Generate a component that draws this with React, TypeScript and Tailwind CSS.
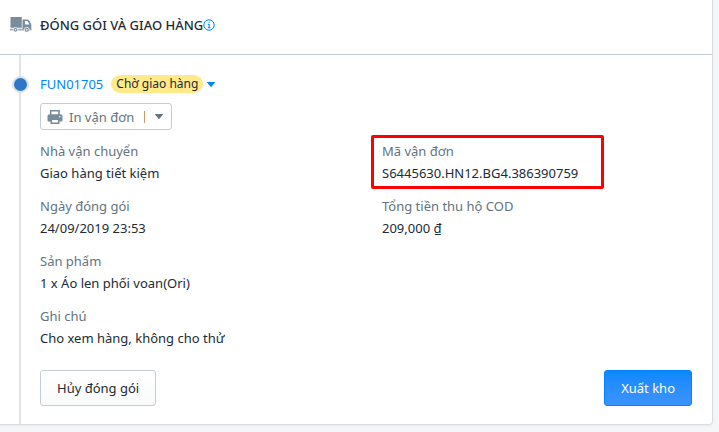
import type { ReactNode } from "react"

interface FieldProps {
    label: string
    value: string
    highlighted?: boolean
}

function Field({ label, value, highlighted }: FieldProps) {
    return (
        <div className="relative">
            {highlighted && (
                <div className="pointer-events-none absolute -top-[5px] -left-[11px] h-[54px] w-[233px] rounded-xs border-3 border-[#ff0000]" />
            )}
            <dt className="text-[#637381]">{label}</dt>
            <dd>{value}</dd>
        </div>
    )
}

function TruckIcon() {
    return (
        <svg className="h-4 w-[22px] shrink-0" viewBox="0 0 22 16" fill="#798c9c" aria-hidden="true">
            <path d="M.5 0h11.300v10.800H.5z" />
            <path fillRule="evenodd" d="M12.500 2.500h4.700c.9 0 1.500.4 2 1.100l1.600 2.700c.3.500.5 1 .5 1.600v4.100h-8.800zM15 4v3.500h4.500L18 4.700a1.400 1.400 0 0 0-1.200-.7z" />
            <path d="M0 11.800h21.500v1.700H0z" opacity=".75" />
            <circle cx="5.500" cy="12.800" r="2.300" stroke="#fff" strokeWidth=".8" />
            <circle cx="16.800" cy="12.800" r="2.500" stroke="#fff" strokeWidth=".8" />
            <circle cx="5.500" cy="12.800" r=".8" fill="#fff" />
            <circle cx="16.800" cy="12.800" r=".9" fill="#fff" />
        </svg>
    )
}

function InfoIcon() {
    return (
        <svg className="size-3" viewBox="0 0 12 12" fill="none" stroke="#0084ff" aria-hidden="true">
            <circle cx="6" cy="6" r="5.200" />
            <path d="M6.200 5v4M4.900 5.300h1.300M4.900 8.800h2.500M5.600 3.200h1.200" strokeWidth="1.100" />
        </svg>
    )
}

function PrinterIcon() {
    return (
        <svg className="size-4" viewBox="0 0 16 16" aria-hidden="true">
            <path d="M3.700 6V1.800h8.300V6" fill="none" stroke="#798c9c" strokeWidth="1.600" />
            <path d="M2.500 5.300h11a2 2 0 0 1 2 2v4.200a1 1 0 0 1-1 1h-13a1 1 0 0 1-1-1V7.300a2 2 0 0 1 2-2z" fill="#798c9c" />
            <path d="M4.300 10.300h7.400v3.900H4.300z" fill="#fff" stroke="#798c9c" strokeWidth="1.600" />
            <circle cx="12.800" cy="7.800" r=".8" fill="#fff" />
        </svg>
    )
}

function Caret({ className }: { className: string }) {
    return (
        <svg className={className} viewBox="0 0 8 5" fill="currentColor" aria-hidden="true">
            <path d="M.4 0h7.200c.4 0 .5.400.2.700L4.400 4.700a.5.5 0 0 1-.8 0L.2.700C-.1.400 0 0 .4 0z" />
        </svg>
    )
}

function TimelineItem({ children }: { children: ReactNode }) {
    return (
        <div className="ml-[19px] border-l-2 border-[#dfe3e8] pt-[18px] pr-5 pb-[18px] pl-[19px]">
            {children}
        </div>
    )
}

export default function App() {
    return (
        <main className="min-h-screen bg-[#f4f6f8] pr-1.5 font-['Noto_Sans','Segoe_UI',sans-serif] text-[13px] leading-[22px] text-[#212b35]">
            <section className="rounded-br-sm border-r border-b border-[#d9dde1] bg-white shadow-xs">
                <header className="flex items-center border-b border-[#c4cdd5] pt-3.5 pb-[18px] pl-2.5">
                    <TruckIcon />
                    <h2 className="ml-2 text-[13px] font-medium">ĐÓNG GÓI VÀ GIAO HÀNG</h2>
                    <button type="button" aria-label="Thông tin">
                        <InfoIcon />
                    </button>
                </header>

                <TimelineItem>
                    <div className="relative flex items-center">
                        <span className="absolute -left-7 size-[17px] rounded-full border-2 border-[#dfe3e8] bg-[#2e78c7]" />
                        <a href="#FUN01705" className="text-[#0084ff]">FUN01705</a>
                        <span className="ml-2 rounded-full bg-[#ffea8a] px-[5px] text-xs leading-[18px]">Chờ giao hàng</span>
                        <button type="button" aria-label="Thao tác" className="ml-1 text-[#0084ff]">
                            <Caret className="h-[5px] w-2" />
                        </button>
                    </div>

                    <button
                        type="button"
                        className="mt-2 flex h-[27px] items-center rounded-[3px] border border-[#c4cdd5] px-1.5 text-[#637381]"
                    >
                        <PrinterIcon />
                        <span className="ml-1.5">In vận đơn</span>
                        <span className="ml-2.5 h-3 w-px bg-[#c69a6b]" />
                        <Caret className="mr-0.5 ml-2.5 h-[5px] w-2" />
                    </button>

                    <dl className="mt-2.5 grid grid-cols-2 gap-x-8 gap-y-[11px]">
                        <Field label="Nhà vận chuyển" value="Giao hàng tiết kiệm" />
                        <Field label="Mã vận đơn" value="S6445630.HN12.BG4.386390759" highlighted />
                        <Field label="Ngày đóng gói" value="24/09/2019 23:53" />
                        <Field label="Tổng tiền thu hộ COD" value="209,000 ₫" />
                        <div className="col-span-2">
                            <Field label="Sản phẩm" value="1 x Áo len phối voan(Ori)" />
                        </div>
                        <div className="col-span-2">
                            <Field label="Ghi chú" value="Cho xem hàng, không cho thử" />
                        </div>
                    </dl>

                    <div className="mt-[21px] flex justify-between">
                        <button
                            type="button"
                            className="h-9 rounded-[3px] border border-[#c4cdd5] bg-linear-to-b from-white to-[#f9fafb] px-4"
                        >
                            Hủy đóng gói
                        </button>
                        <button
                            type="button"
                            className="h-9 rounded-[3px] border border-[#0084ff] bg-linear-to-b from-[#0a88ff] to-[#3b94ff] px-4 text-white"
                        >
                            Xuất kho
                        </button>
                    </div>
                </TimelineItem>
            </section>
        </main>
    )
}
